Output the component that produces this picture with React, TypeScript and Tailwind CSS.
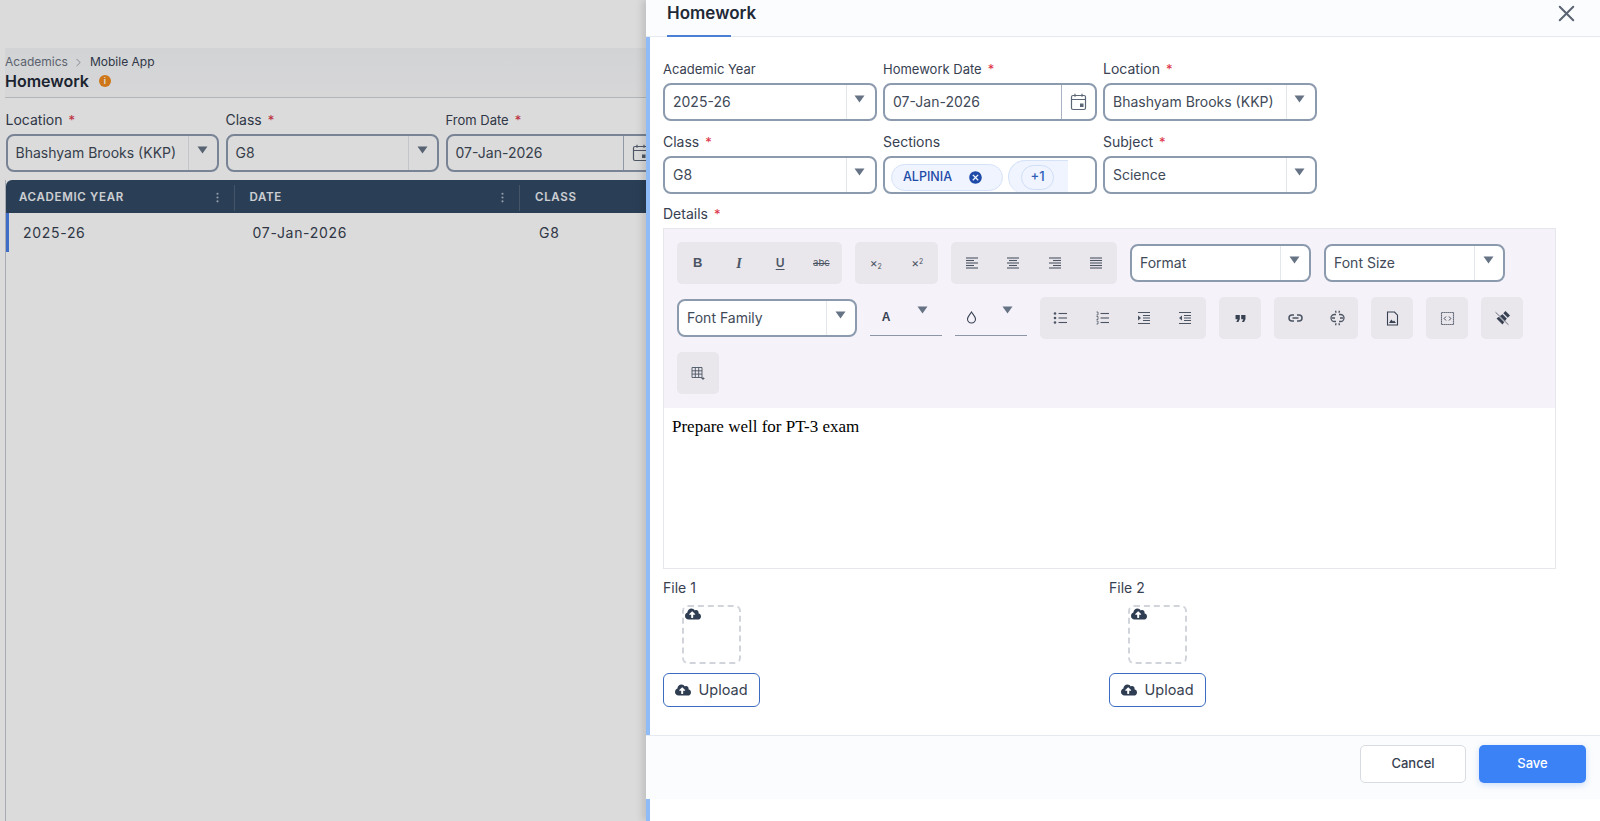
import type { ReactNode } from 'react'
import { ChevronRight, EllipsisVertical, X } from 'lucide-react'
import { FaCloudUploadAlt } from 'react-icons/fa'
import { MdCancel, MdFormatQuote } from 'react-icons/md'

function Req() {
  return <span className="ml-[6px] text-[13px] text-[#dc2f45]">*</span>
}

function Arrow({ className = '' }: { className?: string }) {
  return (
    <svg width="11" height="8" viewBox="0 0 11 8" className={className}>
      <path d="M0.5 0.5h10L5.5 7.5z" fill="#667385" />
    </svg>
  )
}

function Label({ text, required, narrow }: { text: string; required?: boolean; narrow?: boolean }) {
  return (
    <div className={`h-[20px] mb-[4px] leading-[20px] text-[#374151] whitespace-nowrap ${narrow ? 'text-[13px]' : 'text-[14px]'}`}>
      {text}
      {required && <Req />}
    </div>
  )
}

function Select({ value, width = 'w-[213.5px]' }: { value: string; width?: string }) {
  return (
    <div className={`${width} h-[38px] shrink-0 flex items-stretch bg-white border-2 border-[#8c9aae] rounded-[8px]`}>
      <div className="flex-1 min-w-0 pl-[8px] pb-[1px] flex items-center text-[14px] text-[#414a58] whitespace-nowrap">{value}</div>
      <div className="w-[29px] shrink-0 border-l border-[#e3e6ea] flex justify-center pt-[10px] pr-[2px]">
        <Arrow />
      </div>
    </div>
  )
}

function CalendarIcon() {
  return (
    <svg width="17" height="18" viewBox="0 0 17 18" fill="none">
      <rect x="1.5" y="2.5" width="14" height="14" rx="1.5" stroke="#5b6676" strokeWidth="1.2" />
      <path d="M1.5 6.5h14M5 0.8v3M12 0.8v3" stroke="#5b6676" strokeWidth="1.2" />
      <rect x="10" y="10.5" width="3.5" height="3.5" fill="#5b6676" />
    </svg>
  )
}

function DateInput({ value, width = 'w-[213.5px]' }: { value: string; width?: string }) {
  return (
    <div className={`${width} h-[38px] shrink-0 flex items-stretch bg-white border-2 border-[#8c9aae] rounded-[8px]`}>
      <div className="flex-1 pl-[8px] pb-[1px] flex items-center text-[14px] text-[#414a58] whitespace-nowrap">{value}</div>
      <div className="w-[34px] shrink-0 border-l border-[#a8b2c0] flex items-center justify-center">
        <CalendarIcon />
      </div>
    </div>
  )
}

function Group({ width, children }: { width: string; children: ReactNode }) {
  return <div className={`${width} h-[42px] flex bg-[#e9e6ec] rounded-[5px] shrink-0`}>{children}</div>
}

function Btn({ children }: { children: ReactNode }) {
  return <div className="flex-1 h-[42px] flex items-center justify-center text-[#4b5563]">{children}</div>
}

function Lines({ rows }: { rows: Array<[number, number]> }) {
  return (
    <svg width="14" height="14" viewBox="0 0 14 14">
      {rows.map(([x1, x2], i) => (
        <path key={i} d={`M${x1} ${2 + i * 2.5}H${x2}`} stroke="#4b5563" strokeWidth="1.1" />
      ))}
    </svg>
  )
}

function Bullets({ numbered }: { numbered?: boolean }) {
  return (
    <svg width="15" height="14" viewBox="0 0 15 14" fill="none">
      {[2.5, 7, 11.5].map((y) => (
        <g key={y}>
          {numbered ? <path d={`M1.5 ${y - 1.5}h1.5v3h-1.5`} stroke="#4b5563" strokeWidth="0.8" /> : <circle cx="2" cy={y} r="1.3" fill="#4b5563" />}
          <path d={`M5.5 ${y}H14`} stroke="#4b5563" strokeWidth="1.1" />
        </g>
      ))}
    </svg>
  )
}

function Indent({ out }: { out?: boolean }) {
  return (
    <svg width="14" height="14" viewBox="0 0 14 14" fill="none">
      <path d="M1 1.5h12M6 4.5h7M6 7h7M6 9.5h7M1 12.5h12" stroke="#4b5563" strokeWidth="1.2" />
      <path d={out ? 'M4 4.5v5L1 7z' : 'M1 4.5v5L4 7z'} fill="#4b5563" />
    </svg>
  )
}

function LinkIcon() {
  return (
    <svg width="15" height="14" viewBox="0 0 15 14" fill="none" stroke="#4b5563" strokeWidth="1.5">
      <path d="M6 4H4a3 3 0 0 0 0 6h2M9 4h2a3 3 0 0 1 0 6H9M4.5 7h6" />
    </svg>
  )
}

function UnlinkIcon() {
  return (
    <svg width="15" height="16" viewBox="0 0 15 16" fill="none" stroke="#4b5563" strokeWidth="1.3">
      <path d="M6 4.5H4.5a3.5 3.5 0 0 0 0 7H6M9 4.5h1.5a3.5 3.5 0 0 1 0 7H9M2 8h3M10 8h3M5.5 0.8l0.6 2M9.5 0.8l-0.6 2M5.5 15.2l0.6-2M9.5 15.2l-0.6-2" />
    </svg>
  )
}

function ImageFile() {
  return (
    <svg width="13" height="15" viewBox="0 0 13 15" fill="none">
      <path d="M1.5 1h7L11.5 4.2V14h-10z" stroke="#374151" strokeWidth="1.1" />
      <path d="M3 12l2.3-3.5L7 10.4 8 9.5 10 12z" fill="#374151" />
    </svg>
  )
}

function CodeBox() {
  return (
    <svg width="15" height="15" viewBox="0 0 15 15" fill="none">
      <rect x="1.5" y="1.5" width="12" height="12" stroke="#374151" strokeWidth="1.1" strokeDasharray="1.2 0.8" />
      <path d="M6 5.5L4.2 7.5 6 9.5M9 5.5l1.8 2L9 9.5" stroke="#374151" strokeWidth="0.9" />
    </svg>
  )
}

function Eraser() {
  return (
    <svg width="17" height="17" viewBox="0 0 17 17">
      <path d="M11.5 1l4.5 4.5-2.2 2.2-4.5-4.5z" fill="#374151" />
      <path d="M8.5 4.2l4.3 4.3-4.3 6L2.5 8.5z" fill="#374151" />
      <path d="M2 3l12 12" stroke="#e9e6ec" strokeWidth="1.2" />
      <path d="M1.5 2.2l13 12.6" stroke="#374151" strokeWidth="0.7" />
    </svg>
  )
}

function GridPlus() {
  return (
    <svg width="14" height="14" viewBox="0 0 14 14" fill="none" stroke="#4b5563" strokeWidth="0.9">
      <path d="M1 1.5h10v10H1zM1 4.8h10M1 8.1h10M4.3 1.5v10M7.7 1.5v10M10.5 12.5h3M12 11v3" />
    </svg>
  )
}

function ColorPicker({ icon }: { icon: ReactNode }) {
  return (
    <div className="w-[72px] h-[42px] shrink-0">
      <div className="h-[39px] flex items-start border-b border-[#8c96a5]">
        <div className="w-[32px] h-[38px] pt-[2px] flex items-center justify-center">{icon}</div>
        <div className="flex-1 pt-[9px] pl-[15px]">
          <Arrow />
        </div>
      </div>
    </div>
  )
}

function FileBlock({ title }: { title: string }) {
  return (
    <div>
      <div className="h-[20px] mb-[7px] text-[14px] leading-[20px] text-[#374151]">{title}</div>
      <div className="ml-[19px] w-[59px] h-[59px] border-2 border-dashed border-[#d1d5db] rounded-[6px] pl-[1px]">
        <FaCloudUploadAlt size={16} color="#2f3d52" className="-mt-[1px]" />
      </div>
      <div className="mt-[9px] w-[97px] h-[34px] flex items-center justify-center gap-[7px] border border-[#3b6cc0] rounded-[6px] text-[14.5px] text-[#374151]">
        <FaCloudUploadAlt size={16} color="#2f3d52" />
        Upload
      </div>
    </div>
  )
}

export default function App() {
  return (
    <div className="relative w-[1600px] h-[821px] overflow-hidden bg-white font-['Inter',sans-serif]">
      {/* page behind the drawer */}
      <div className="h-full flex flex-col pt-[48px]">
        <div className="ml-[5px] h-[50px] border-b border-[#d0d4da] bg-gradient-to-b from-[#f4f6f9] to-[#fbfbfc]">
          <div className="h-[24px] pt-[4px] flex items-center gap-[4.5px] text-[12px] text-[#6b7280]">
            Academics
            <ChevronRight size={13} strokeWidth={1.2} />
            <span className="text-[#374151]">Mobile App</span>
          </div>
          <div className="h-[22px] -mt-[2px] flex items-center gap-[10px] text-[16px] font-semibold text-[#1f2937]">
            Homework
            <span className="w-[12px] h-[12px] rounded-full bg-[#f08a1d] text-white text-[8px] leading-[12px] text-center font-bold">i</span>
          </div>
        </div>
        <div className="pl-[5.5px] pt-[12px] flex gap-[6.5px]">
          <div>
            <Label text="Location" required />
            <Select value="Bhashyam Brooks (KKP)" />
          </div>
          <div>
            <Label text="Class" required />
            <Select value="G8" />
          </div>
          <div>
            <Label text="From Date" required narrow />
            <DateInput value="07-Jan-2026" />
          </div>
        </div>
        <div className="ml-[5px] mt-[8px] flex-1 border-l border-[#c4c8ce]">
          <div className="h-[33px] pt-[2px] flex items-center bg-[#324a65] rounded-t-[6px] text-[11.5px] font-semibold tracking-[0.06em] text-[#eef1f5]">
            <div className="w-[228.5px] h-[26px] pl-[13px] flex items-center justify-between pr-[10px] border-r border-[#50647c]">
              ACADEMIC YEAR
              <EllipsisVertical size={13} color="#a9b4c2" />
            </div>
            <div className="w-[285.5px] h-[26px] pl-[15px] flex items-center justify-between pr-[10px] border-r border-[#50647c]">
              DATE
              <EllipsisVertical size={13} color="#a9b4c2" />
            </div>
            <div className="pl-[15px]">CLASS</div>
          </div>
          <div className="h-[39px] flex items-center border-l-[3px] border-[#4a81e8] text-[14px] tracking-[0.05em] text-[#374151]">
            <div className="w-[226.5px] pl-[14px]">2025-26</div>
            <div className="w-[285.5px] pl-[17px]">07-Jan-2026</div>
            <div className="pl-[18px]">G8</div>
          </div>
        </div>
      </div>
      <div className="absolute inset-0 bg-black/[.14]" />

      {/* drawer */}
      <div className="absolute top-0 right-0 bottom-0 w-[954px] flex flex-col bg-white shadow-[-4px_0_7px_rgba(0,0,0,0.12)]">
        <div className="h-[37px] shrink-0 flex items-start justify-between pl-[21px] pr-[20px] bg-[#fbfcfe] border-b border-[#e5e9f0]">
          <div className="h-[37px] w-[64px] border-b-2 border-[#4a7fd4] -mb-[1px]">
            <div className="text-[17px] leading-[26px] font-semibold text-[#1f2937] whitespace-nowrap">Homework</div>
          </div>
          <X size={27} strokeWidth={1.8} color="#5b6472" />
        </div>

        <div className="flex-1 min-h-0 border-l-[4px] border-[#8fbcf6] pl-[13px] pt-[22px]">
          <div className="flex gap-[6.5px]">
            <div>
              <Label text="Academic Year" narrow />
              <Select value="2025-26" />
            </div>
            <div>
              <Label text="Homework Date" required narrow />
              <DateInput value="07-Jan-2026" />
            </div>
            <div>
              <Label text="Location" required />
              <Select value="Bhashyam Brooks (KKP)" />
            </div>
          </div>
          <div className="mt-[11px] flex gap-[6.5px]">
            <div>
              <Label text="Class" required />
              <Select value="G8" />
            </div>
            <div>
              <Label text="Sections" />
              <div className="w-[213.5px] h-[38px] flex items-center pl-[6px] bg-white border-2 border-[#8c9aae] rounded-[8px] overflow-hidden">
                <div className="mt-[5px] w-[112px] h-[27px] pl-[11px] pr-[19px] flex items-center justify-between bg-[#eff4fe] border border-[#d5e2f8] rounded-full text-[12.5px] font-medium text-[#1e4ba8]">
                  ALPINIA
                  <MdCancel size={15} color="#1e4ba8" />
                </div>
                <div className="ml-[5px] mt-[3px] w-[60px] h-[34px] pl-[12px] flex items-center bg-[#eff4fe] border-l border-t border-[#d5e2f8] rounded-l-full">
                  <div className="w-[33px] h-[25px] flex items-center justify-center border border-[#cfdef7] rounded-full text-[13px] font-medium text-[#2f5fb8]">+1</div>
                </div>
              </div>
            </div>
            <div>
              <Label text="Subject" required />
              <Select value="Science" />
            </div>
          </div>

          <div className="mt-[10px]">
            <Label text="Details" required />
            <div className="w-[893px] h-[341px] border border-[#e5e7eb]">
              <div className="h-[179px] bg-[#f5f2fa] pl-[13px] pt-[13px] flex flex-wrap content-start items-center gap-[13px]">
                <Group width="w-[165px]">
                  <Btn><span className="text-[13px] font-bold font-['Liberation_Sans',sans-serif]">B</span></Btn>
                  <Btn><span className="text-[14px] italic font-semibold font-['Liberation_Serif',serif]">I</span></Btn>
                  <Btn><span className="text-[12px] font-semibold underline underline-offset-2">U</span></Btn>
                  <Btn><span className="text-[9.5px] line-through">abc</span></Btn>
                </Group>
                <Group width="w-[83px]">
                  <Btn><span className="text-[12px] leading-none">×<sub className="text-[7px]">2</sub></span></Btn>
                  <Btn><span className="text-[12px] leading-none">×<sup className="text-[7px]">2</sup></span></Btn>
                </Group>
                <Group width="w-[166px]">
                  <Btn><Lines rows={[[1, 13], [1, 9], [1, 13], [1, 9], [1, 13]]} /></Btn>
                  <Btn><Lines rows={[[1, 13], [3, 11], [1, 13], [3, 11], [1, 13]]} /></Btn>
                  <Btn><Lines rows={[[1, 13], [5, 13], [1, 13], [5, 13], [1, 13]]} /></Btn>
                  <Btn><Lines rows={[[1, 13], [1, 13], [1, 13], [1, 13], [1, 13]]} /></Btn>
                </Group>
                <Select value="Format" width="w-[181px]" />
                <Select value="Font Size" width="w-[181px]" />
                <Select value="Font Family" width="w-[180px]" />
                <ColorPicker icon={<span className="text-[12px] font-bold text-[#374151] font-['Liberation_Sans',sans-serif]">A</span>} />
                <ColorPicker
                  icon={
                    <svg width="11" height="13" viewBox="0 0 11 13" fill="none">
                      <path d="M5.5 1C4 3.5 1.5 5.5 1.5 8a4 4 0 0 0 8 0C9.5 5.5 7 3.5 5.5 1z" stroke="#374151" strokeWidth="1.1" />
                    </svg>
                  }
                />
                <Group width="w-[166px]">
                  <Btn><Bullets /></Btn>
                  <Btn><Bullets numbered /></Btn>
                  <Btn><Indent /></Btn>
                  <Btn><Indent out /></Btn>
                </Group>
                <Group width="w-[42px]"><Btn><MdFormatQuote size={17} color="#374151" /></Btn></Group>
                <Group width="w-[84px]">
                  <Btn><LinkIcon /></Btn>
                  <Btn><UnlinkIcon /></Btn>
                </Group>
                <Group width="w-[42px]"><Btn><ImageFile /></Btn></Group>
                <Group width="w-[42px]"><Btn><CodeBox /></Btn></Group>
                <Group width="w-[42px]"><Btn><Eraser /></Btn></Group>
                <Group width="w-[42px]"><Btn><GridPlus /></Btn></Group>
              </div>
              <div className="pl-[8px] pt-[8px] text-[17px] leading-[22px] text-black font-['Liberation_Serif',serif]">
                Prepare well for PT-3 exam
              </div>
            </div>
          </div>

          <div className="mt-[9px] grid grid-cols-[446px_447px]">
            <FileBlock title="File 1" />
            <FileBlock title="File 2" />
          </div>
        </div>

        <div className="h-[64px] shrink-0 flex items-start justify-end gap-[13px] pt-[9px] pr-[14px] bg-[#fbfcfd] border-t border-[#e5e9f0]">
          <div className="w-[106px] h-[38px] flex items-center justify-center bg-white border border-[#d8dce2] rounded-[5px] text-[13px] font-medium text-[#374151]">Cancel</div>
          <div className="w-[107px] h-[38px] flex items-center justify-center bg-[#3b82f6] rounded-[5px] text-[13px] font-medium text-white shadow-[0_2px_6px_rgba(59,130,246,0.25)]">Save</div>
        </div>
        <div className="h-[22px] shrink-0 border-l-[4px] border-[#8fbcf6]" />
      </div>
    </div>
  )
}
